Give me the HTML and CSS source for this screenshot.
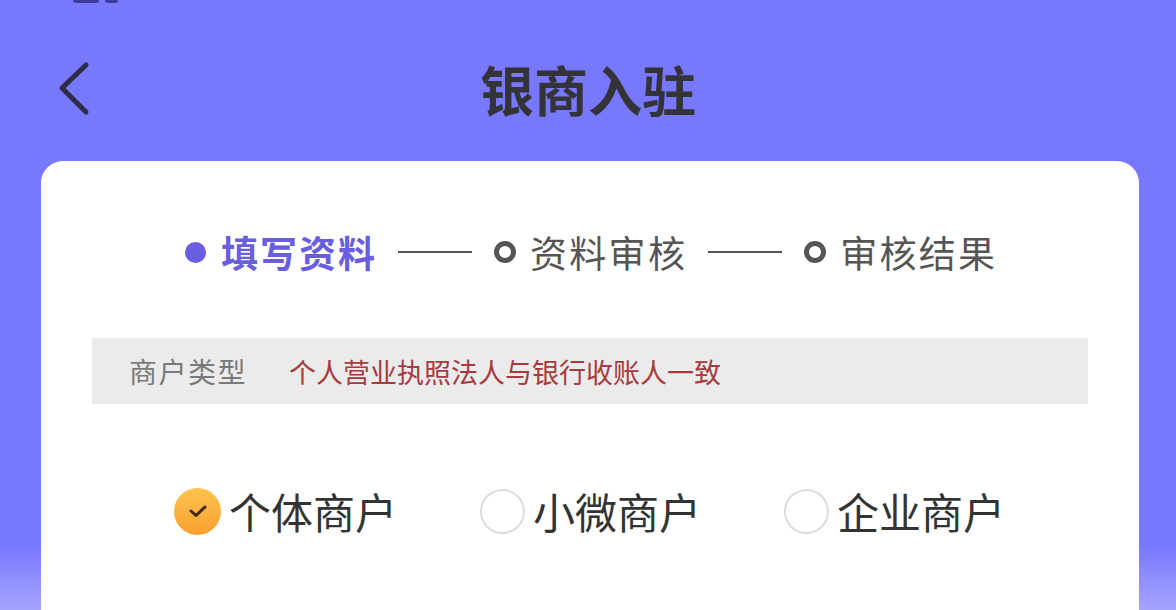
FILE: index.html
```html
<!DOCTYPE html>
<html lang="zh">
<head>
<meta charset="utf-8">
<link rel="stylesheet" href="styles.css">
</head>
<body>
<div class="page">
  <div class="status"><span class="s1"></span><span class="s2"></span></div>
  <header class="nav">
    <svg class="back" width="40" height="60" viewBox="0 0 40 60"><path d="M32 8 L8 31 L32 55" fill="none" stroke="#2c2c42" stroke-width="5" stroke-linecap="round" stroke-linejoin="round"/></svg>
    <h1 class="title">银商入驻</h1>
  </header>
  <main class="card">
    <div class="steps">
      <div class="step active"><span class="dot"></span><span class="label">填写资料</span></div>
      <span class="line"></span>
      <div class="step"><span class="ring"></span><span class="label">资料审核</span></div>
      <span class="line"></span>
      <div class="step"><span class="ring"></span><span class="label">审核结果</span></div>
    </div>
    <div class="typebar">
      <span class="typekey">商户类型</span>
      <span class="typeval">个人营业执照法人与银行收账人一致</span>
    </div>
    <div class="radios">
      <div class="radio checked">
        <span class="circle"><svg width="24" height="18" viewBox="0 0 24 18"><path d="M5 9 L10 13.5 L19 5" fill="none" stroke="#3a2812" stroke-width="3" stroke-linecap="round" stroke-linejoin="round"/></svg></span>
        <span class="rlabel">个体商户</span>
      </div>
      <div class="radio"><span class="circle"></span><span class="rlabel">小微商户</span></div>
      <div class="radio"><span class="circle"></span><span class="rlabel">企业商户</span></div>
    </div>
  </main>
</div>
</body>
</html>
```

FILE: styles.css
```css
html, body {
  margin: 0;
  padding: 0;
}
body {
  width: 1176px;
  height: 610px;
  overflow: hidden;
  font-family: "Noto Sans CJK SC", "Noto Sans", sans-serif;
  background: linear-gradient(to bottom, #7878fe 0px, #7878fe 545px, #a4a4ff 610px);
}
.page {
  position: relative;
  height: 610px;
  overflow: hidden;
}
.status {
  height: 0;
  position: relative;
}
.status .s1, .status .s2 {
  position: absolute;
  top: -3px;
  height: 6px;
  border-radius: 3px;
  background: #3b3c9e;
}
.status .s1 { left: 73px; width: 26px; }
.status .s2 { left: 105px; width: 13px; }
.nav {
  height: 161px;
  display: flex;
  align-items: flex-start;
  justify-content: center;
  position: relative;
}
.back {
  position: absolute;
  left: 54px;
  top: 57px;
}
.title {
  margin: 0;
  margin-top: 55px;
  font-size: 54px;
  line-height: 68px;
  font-weight: 700;
  color: #333338;
}
.card {
  margin: 0 37px 0 41px;
  height: 449px;
  background: #fff;
  border-radius: 22px 22px 0 0;
  box-sizing: border-box;
  padding: 66px 51px 0 51px;
}
.steps {
  display: flex;
  align-items: center;
  padding-left: 93px;
  height: 50px;
  white-space: nowrap;
}
.step {
  display: flex;
  align-items: center;
}
.dot {
  width: 21px;
  height: 21px;
  border-radius: 50%;
  background: #6a5ee0;
  margin-right: 15px;
}
.ring {
  width: 22px;
  height: 22px;
  box-sizing: border-box;
  border-radius: 50%;
  border: 5px solid #555;
  margin-right: 14px;
}
.label {
  font-size: 37px;
  line-height: 50px;
  color: #555;
  letter-spacing: 2.3px;
}
.step.active .label {
  color: #6a5ee0;
  font-weight: 700;
  letter-spacing: 2px;
}
.line {
  width: 74px;
  height: 2px;
  background: #555;
  margin: 0 22px 0 21px;
}
.typebar {
  margin-top: 61px;
  height: 66px;
  background: #ebebeb;
  display: flex;
  align-items: center;
  padding-left: 37px;
  white-space: nowrap;
}
.typekey {
  font-size: 28px;
  color: #7a7a7a;
  letter-spacing: 1.5px;
}
.typeval {
  margin-left: 42px;
  font-size: 27px;
  color: #a8393c;
}
.radios {
  display: flex;
  align-items: center;
  margin-top: 82px;
  padding-left: 82px;
  height: 50px;
  white-space: nowrap;
}
.radio {
  display: flex;
  align-items: center;
  flex-shrink: 0;
  margin-right: 83px;
}
.radio:last-child { margin-right: 0; }
.circle {
  flex-shrink: 0;
  width: 45px;
  height: 45px;
  box-sizing: border-box;
  border-radius: 50%;
  border: 2px solid #dcdcdc;
  display: flex;
  align-items: center;
  justify-content: center;
  margin-right: 8px;
}
.radio.checked .circle {
  border: none;
  width: 47px;
  height: 47px;
  background: linear-gradient(to bottom, #ffc34e, #f9a02f);
}
.rlabel {
  font-size: 42px;
  line-height: 50px;
  color: #333;
}
```
